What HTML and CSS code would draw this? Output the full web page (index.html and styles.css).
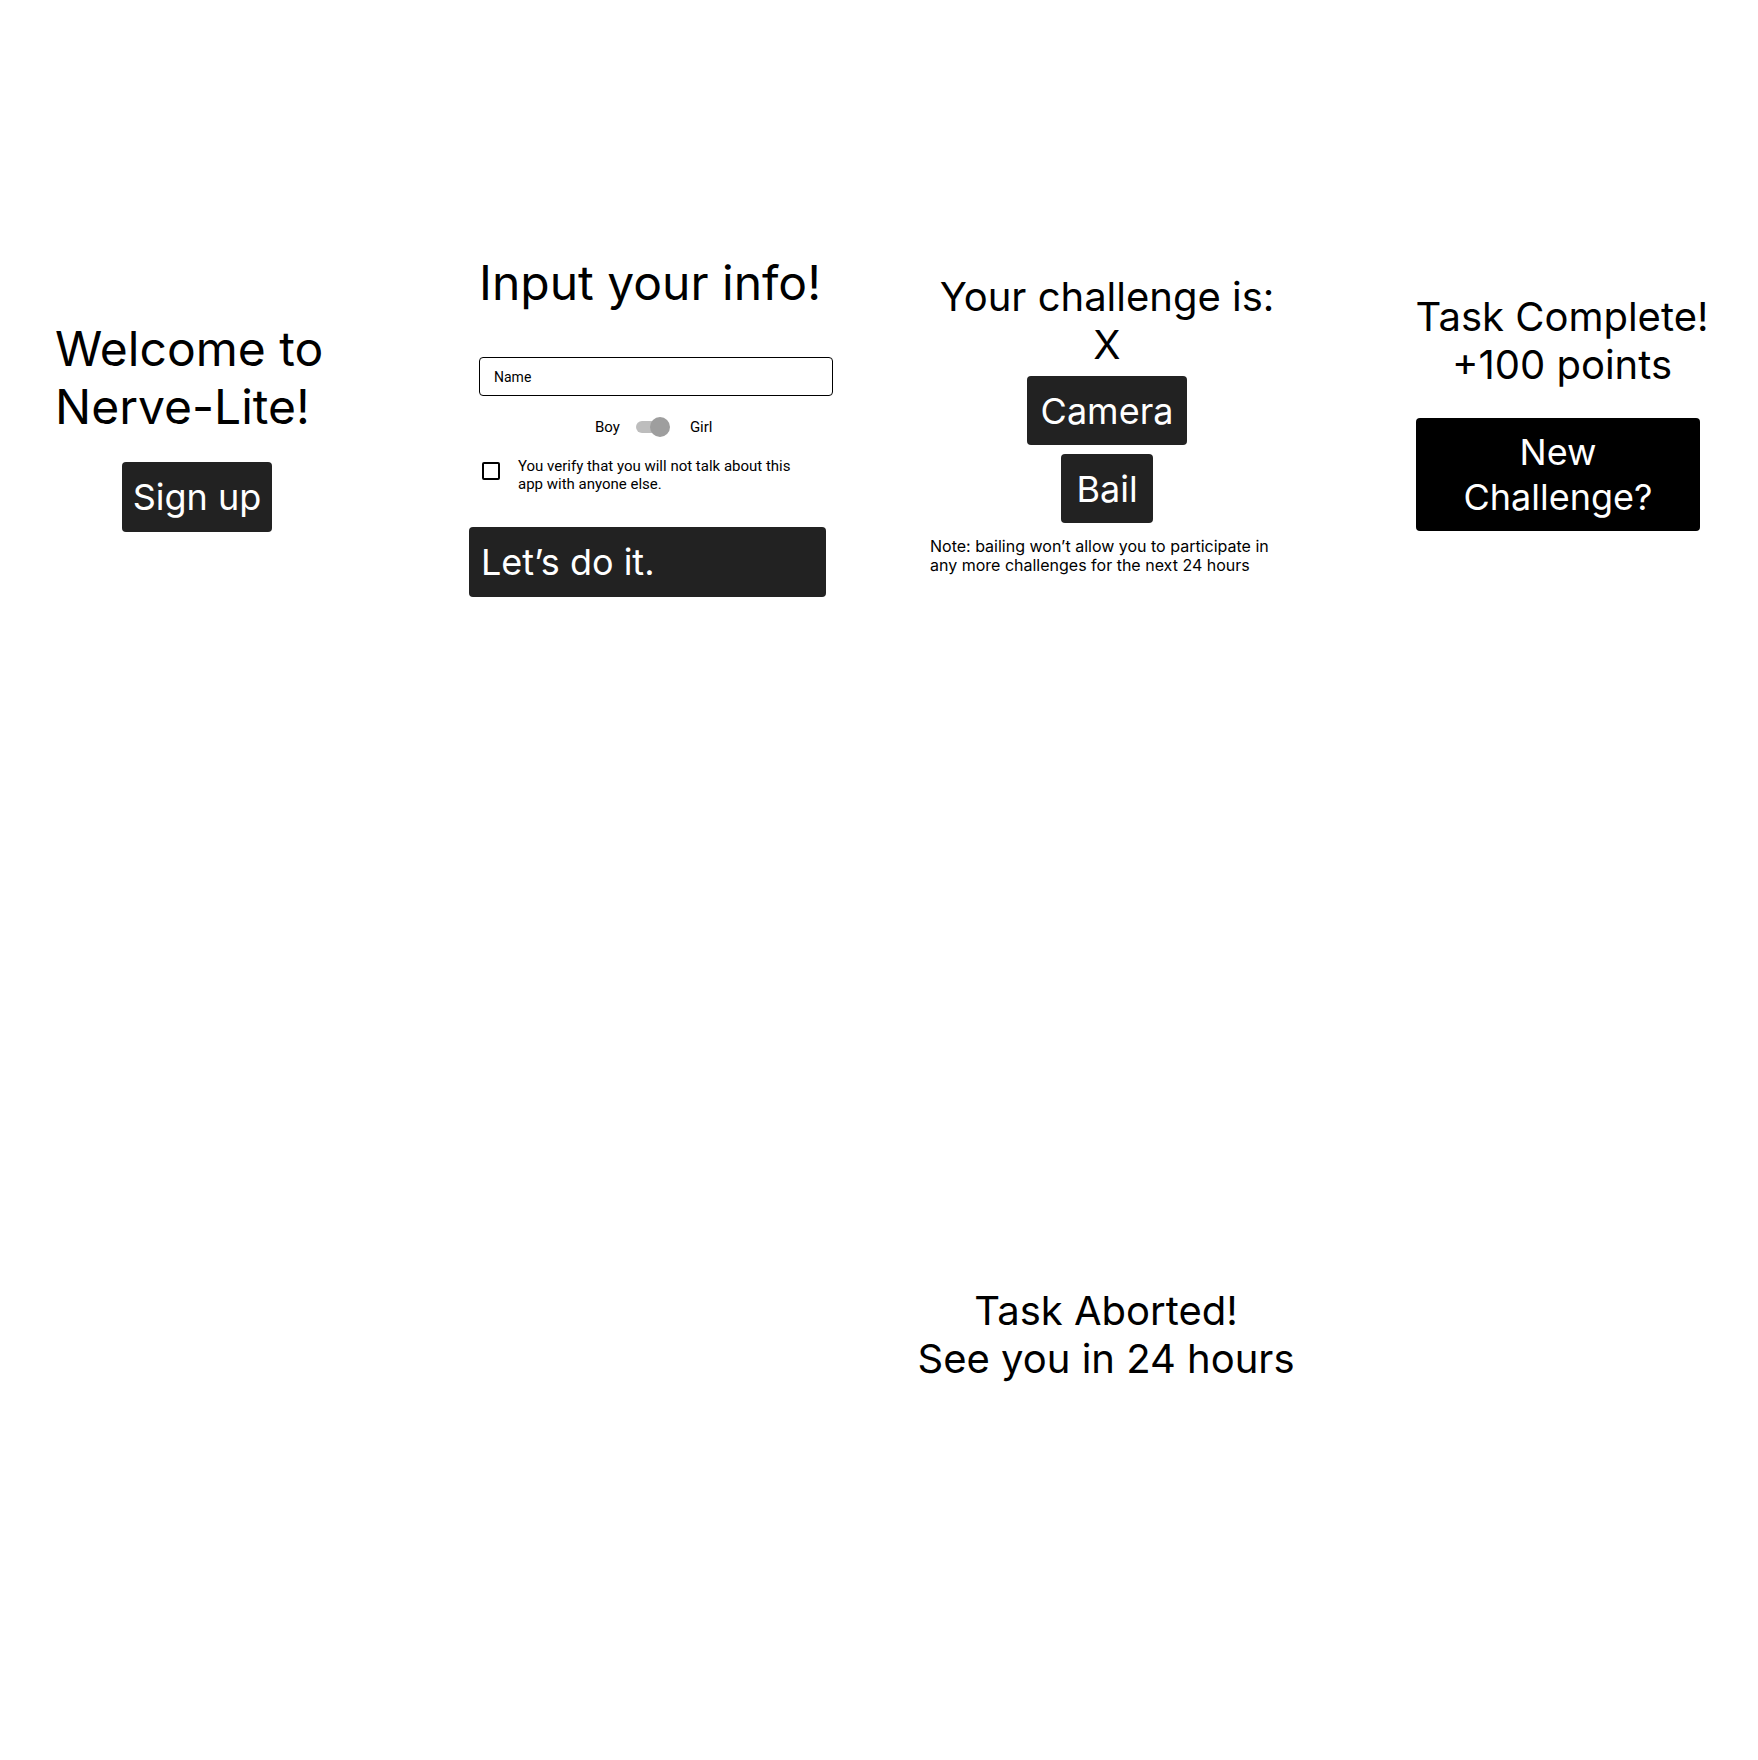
FILE: index.html
```html
<!DOCTYPE html>
<html lang="en">
<head>
<meta charset="utf-8">
<title>Nerve-Lite</title>
<link rel="stylesheet" href="styles.css">
</head>
<body>
<main class="canvas">
  <section class="frame frame-welcome">
    <h1 class="title-lg">Welcome to<br>Nerve-Lite!</h1>
    <button class="btn btn-signup">Sign up</button>
  </section>

  <section class="frame frame-info">
    <h1 class="title-lg">Input your info!</h1>
    <div class="field">Name</div>
    <div class="toggle-row">
      <span class="small">Boy</span>
      <span class="switch"><span class="switch-track"></span><span class="switch-thumb"></span></span>
      <span class="small">Girl</span>
    </div>
    <div class="check-row">
      <span class="checkbox"></span>
      <p class="small check-text">You verify that you will not talk about this<br>app with anyone else.</p>
    </div>
    <button class="btn btn-go">Let’s do it.</button>
  </section>

  <section class="frame frame-challenge">
    <h2 class="title-md">Your challenge is:<br>X</h2>
    <button class="btn btn-camera">Camera</button>
    <button class="btn btn-bail">Bail</button>
    <p class="note">Note: bailing won’t allow you to participate in<br>any more challenges for the next 24 hours</p>
  </section>

  <section class="frame frame-complete">
    <h2 class="title-md">Task Complete!<br>+100 points</h2>
    <button class="btn btn-new">New<br>Challenge?</button>
  </section>

  <section class="frame frame-aborted">
    <h2 class="title-md">Task Aborted!<br>See you in 24 hours</h2>
  </section>
</main>
</body>
</html>
```

FILE: styles.css
```css
* { box-sizing: border-box; }

html, body {
  margin: 0;
  padding: 0;
  background: #ffffff;
}

body {
  font-family: Inter, "Noto Sans", sans-serif;
  color: #000000;
}

.canvas {
  position: relative;
  width: 1758px;
  height: 1760px;
  overflow: hidden;
}

.frame {
  position: absolute;
  display: flex;
  flex-direction: column;
}

h1, h2, p { margin: 0; font-weight: 400; }

.title-lg {
  font-size: 48px;
  line-height: 58px;
}

.title-md {
  font-size: 40px;
  line-height: 48px;
  text-align: center;
}

.btn {
  font-family: Inter, "Noto Sans", sans-serif;
  border: 0;
  margin: 0;
  padding: 0;
  color: #ffffff;
  background: #222222;
  border-radius: 4px;
  font-size: 36px;
  line-height: 44px;
  display: flex;
  align-items: center;
  justify-content: center;
}

/* Frame 1 */
.frame-welcome {
  left: 55px;
  top: 320px;
}

.btn-signup {
  width: 150px;
  height: 70px;
  margin-top: 26px;
  margin-left: 67px;
}

/* Frame 2 */
.frame-info {
  left: 479px;
  top: 254px;
  width: 360px;
}

.field {
  margin-top: 45px;
  width: 354px;
  height: 39px;
  border: 1px solid #000000;
  border-radius: 4px;
  padding-left: 14px;
  display: flex;
  align-items: center;
  font-family: Roboto, "Liberation Sans", sans-serif;
  font-size: 14px;
  color: #000000;
}

.small {
  font-family: Roboto, "Liberation Sans", sans-serif;
  font-size: 15px;
  line-height: 18px;
  color: #000000;
}

.toggle-row {
  margin-top: 21px;
  height: 20px;
  display: flex;
  align-items: center;
  padding-left: 116px;
}

.switch {
  position: relative;
  width: 34px;
  height: 20px;
  margin-left: 16px;
  margin-right: 20px;
}

.switch-track {
  position: absolute;
  left: 0;
  top: 4px;
  width: 30px;
  height: 12px;
  border-radius: 6px;
  background: #bdbdbd;
}

.switch-thumb {
  position: absolute;
  left: 14px;
  top: 0;
  width: 20px;
  height: 20px;
  border-radius: 50%;
  background: #9e9e9e;
}

.check-row {
  margin-top: 20px;
  display: flex;
  align-items: flex-start;
}

.checkbox {
  width: 18px;
  height: 18px;
  border: 2px solid #000000;
  border-radius: 2px;
  margin-top: 5px;
  margin-left: 3px;
  flex: none;
}

.check-text {
  margin-left: 18px;
}

.btn-go {
  margin-top: 34px;
  margin-left: -10px;
  width: 357px;
  height: 70px;
  justify-content: flex-start;
  padding-left: 12px;
}

/* Frame 3 */
.frame-challenge {
  left: 907px;
  top: 273px;
  width: 400px;
  align-items: center;
}

.btn-camera {
  margin-top: 7px;
  width: 160px;
  height: 69px;
}

.btn-bail {
  margin-top: 9px;
  width: 92px;
  height: 69px;
}

.note {
  align-self: flex-start;
  margin-left: 23px;
  margin-top: 14px;
  font-size: 16px;
  line-height: 19px;
}

/* Frame 4 */
.frame-complete {
  left: 1412px;
  top: 293px;
  width: 300px;
  align-items: center;
}

.btn-new {
  margin-top: 29px;
  margin-left: -8px;
  width: 284px;
  height: 113px;
  background: #000000;
  line-height: 45px;
  text-align: center;
}

/* Frame 5 */
.frame-aborted {
  left: 906px;
  top: 1287px;
  width: 400px;
  align-items: center;
}
```
